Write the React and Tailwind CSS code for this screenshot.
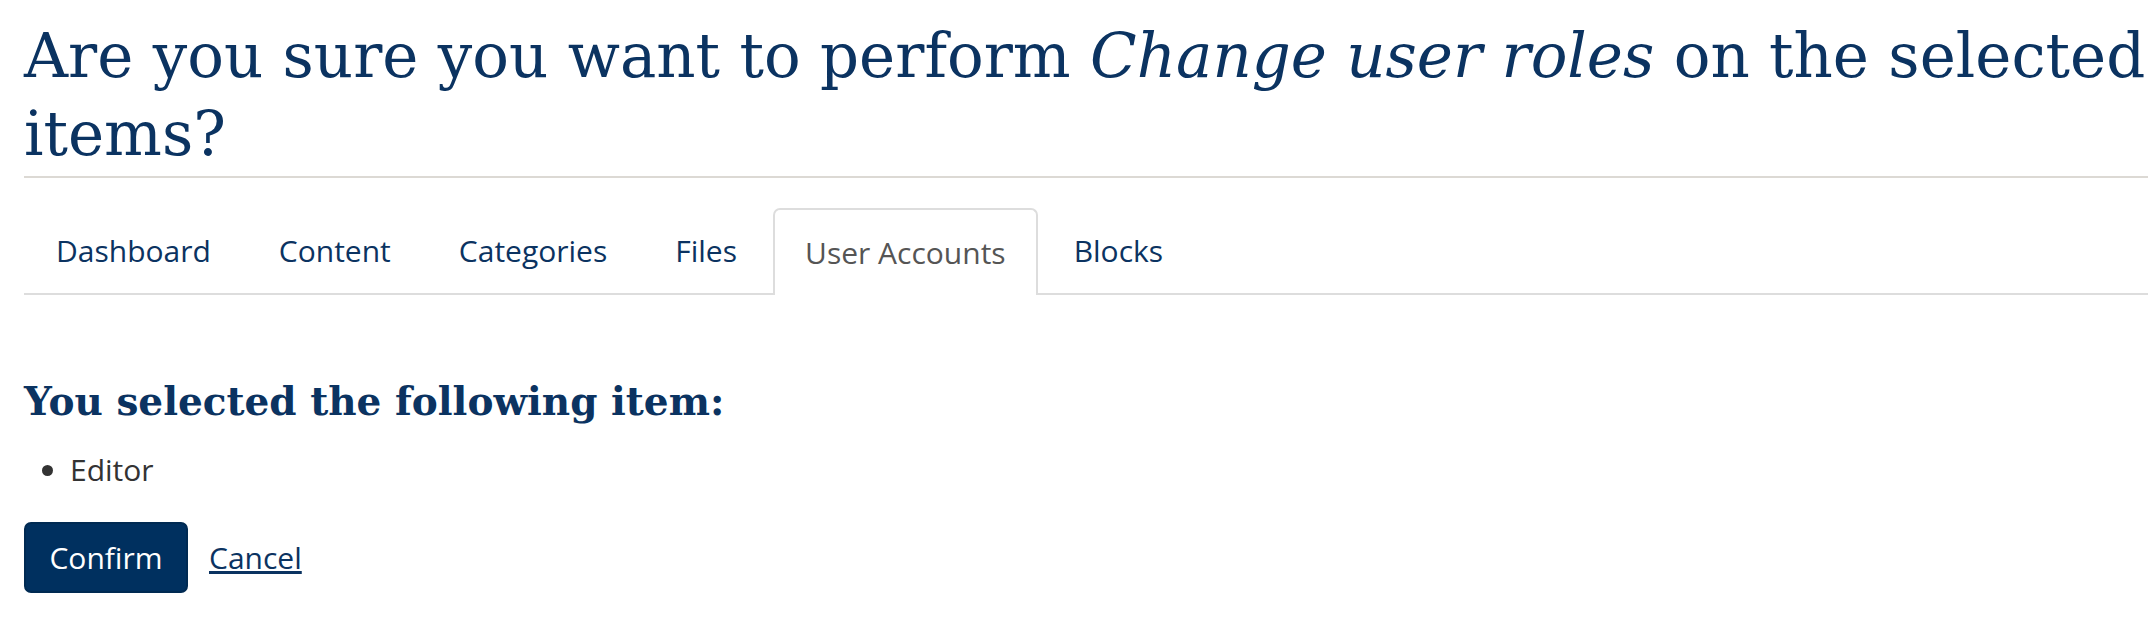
import React from 'react';

const tabs = ['Dashboard', 'Content', 'Categories', 'Files', 'User Accounts', 'Blocks'];
const active = 'User Accounts';

const App = () => {
  return (
    <div className="min-h-screen bg-white pl-6 font-['Open_Sans',sans-serif]">
      {/* Page title */}
      <div className="border-b-2 border-[#dcd9d4] pb-[3px]">
        <h1 className="pt-[17px] font-['DejaVu_Serif',serif] text-[61px] leading-[78px] text-[#0b3361]">
          Are you sure you want to perform <em>Change user roles</em> on the selected items?
        </h1>
      </div>

      {/* Tabs */}
      <nav className="mt-[30px] flex gap-1 border-b-2 border-[#dddddd]">
        {tabs.map((tab) => (
          <a
            key={tab}
            href="#"
            className={
              tab === active
                ? '-mb-[2px] flex h-[87px] items-center rounded-t-[7px] border-2 border-b-0 border-[#dddddd] bg-white px-[30px] text-[30px] text-[#555555]'
                : 'flex h-[85px] items-center px-8 text-[30px] text-[#0b3361]'
            }
          >
            {tab}
          </a>
        ))}
      </nav>

      {/* Selected items */}
      <h2 className="mt-[82px] font-['DejaVu_Serif',serif] text-[39px] font-bold leading-[48px] text-[#0b3361]">
        You selected the following item:
      </h2>
      <ul className="mt-[25px] list-disc pl-[46px] text-[30px] leading-[40px] text-[#333333]">
        <li>Editor</li>
      </ul>

      <div className="mt-[32px] flex items-center gap-[21px]">
        <button className="h-[71px] w-[164px] rounded-[7px] border-2 border-[#002a52] bg-[#00305f] text-[30px] text-white">
          Confirm
        </button>
        <a href="#" className="text-[30px] text-[#0b3361] underline underline-offset-2">
          Cancel
        </a>
      </div>
    </div>
  );
};

export default App;
